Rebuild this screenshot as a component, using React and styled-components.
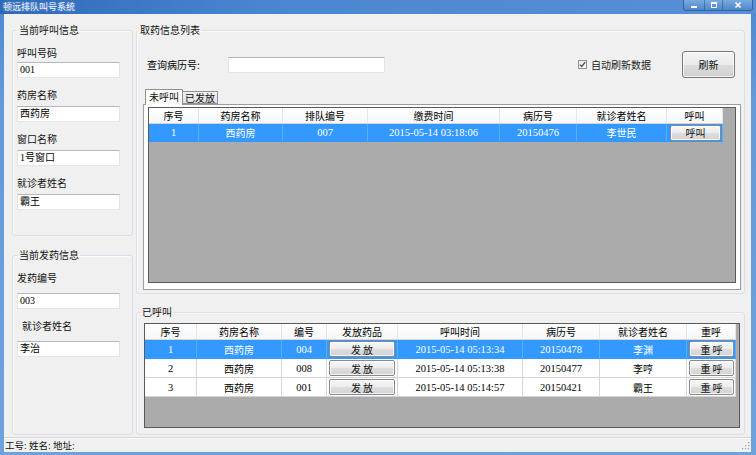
import React from 'react';
import styled, { createGlobalStyle } from 'styled-components';

const CJK = `"Noto Sans CJK SC", "Noto Sans", sans-serif`;
const DATA = `"Liberation Serif", "Noto Sans CJK SC", serif`;

const GlobalStyle = createGlobalStyle`
  html, body { margin: 0; padding: 0; background: #ffffff; }
  body { font-family: ${CJK}; font-size: 10px; color: #000; }
  * { box-sizing: border-box; }
`;

const Window = styled.div`
  width: 756px;
  height: 455px;
  display: flex;
  flex-direction: column;
  background: linear-gradient(180deg, #3572c2 0px, #4f8bd3 14px, #639ad9 100px, #6ea2dd 100%);
  overflow: hidden;
`;

const TitleBar = styled.div`
  height: 14px;
  display: flex;
  align-items: flex-start;
  justify-content: space-between;
  padding-left: 3px;
  background: linear-gradient(90deg, #2e69b8 0%, #4a86d0 35%, #5790d5 100%);
`;

const TitleText = styled.span`
  color: #f4f8fd;
  font-size: 9px;
  line-height: 13px;
  text-shadow: 0 0 3px rgba(255, 255, 255, 0.35);
`;

const ControlBox = styled.div`
  display: flex;
  height: 11px;
  margin-right: 3px;
  border: 1px solid rgba(30, 60, 110, 0.55);
  border-top: none;
  border-radius: 0 0 3px 3px;
  overflow: hidden;
`;

const CtrlButton = styled.div`
  width: ${(p) => p.$w}px;
  display: flex;
  align-items: center;
  justify-content: center;
  background: linear-gradient(180deg, #7aaae0, #4f87cc);
  border-left: ${(p) => (p.$first ? 'none' : '1px solid rgba(30, 60, 110, 0.45)')};
`;

const Client = styled.div`
  flex: 1;
  margin: 0 5px 3px 4px;
  background: #f0f0f0;
  display: flex;
  flex-direction: column;
  min-height: 0;
`;

const Main = styled.div`
  flex: 1;
  display: flex;
  padding: 10px 0 2px 0;
  min-height: 0;
`;

const LeftCol = styled.div`
  width: 132px;
  padding: 0 3px 0 8px;
  display: flex;
  flex-direction: column;
  gap: 13px;
`;

const RightCol = styled.div`
  flex: 1;
  padding-right: 6px;
  display: flex;
  flex-direction: column;
  gap: 12px;
  min-width: 0;
`;

const Group = styled.fieldset`
  margin: 0;
  min-width: 0;
  border: 1px solid #d9dfe4;
  border-radius: 3px;
  padding: ${(p) => p.$pad};
  height: ${(p) => (p.$h ? `${p.$h}px` : 'auto')};
  flex: ${(p) => (p.$grow ? 1 : 'none')};
  display: flex;
  flex-direction: column;
  box-shadow: inset 1px 1px 0 #fbfbfb;
`;

const Legend = styled.legend`
  padding: 0 1px;
  margin-left: ${(p) => p.$ml}px;
  font-size: 10px;
  line-height: 12px;
  color: #111;
`;

const FieldLabel = styled.div`
  line-height: 14px;
  font-size: 10px;
  padding-left: ${(p) => p.$indent || 0}px;
  margin-bottom: ${(p) => p.$gap}px;
  color: #111;
`;

const TextBox = styled.div`
  width: ${(p) => p.$w || 103}px;
  height: 16px;
  background: #fff;
  border: 1px solid #e2e6ea;
  border-top-color: #b4b8be;
  font-family: ${DATA};
  font-size: 10px;
  line-height: 14px;
  padding-left: 2px;
  margin-bottom: ${(p) => (p.$mb == null ? 10 : p.$mb)}px;
  white-space: nowrap;
`;

const SearchRow = styled.div`
  height: 27px;
  flex: none;
  display: flex;
  align-items: center;
  padding: 0 6px 0 4px;
`;

const SearchLabel = styled.span`
  width: 81px;
  font-size: 10px;
`;

const CheckGroup = styled.label`
  margin-left: auto;
  display: flex;
  align-items: center;
  gap: 4px;
  font-size: 10px;
  color: #222;
`;

const CheckBox = styled.span`
  width: 9px;
  height: 9px;
  border: 1px solid #939393;
  background: linear-gradient(180deg, #e9e9e9, #f9f9f9);
  display: flex;
  align-items: center;
  justify-content: center;
`;

const PushButton = styled.button`
  margin-left: 31px;
  width: 53px;
  height: 27px;
  border: 1px solid #7a7a7a;
  border-radius: 3px;
  background: linear-gradient(180deg, #f4f4f4 0%, #ebebeb 50%, #dddddd 51%, #d0d0d0 100%);
  font-family: ${CJK};
  font-size: 10px;
  color: #111;
  padding: 0;
  box-shadow: inset 0 0 0 1px rgba(255, 255, 255, 0.7);
`;

const TabStrip = styled.div`
  margin-top: 11px;
  height: 15px;
  flex: none;
  display: flex;
  align-items: flex-end;
  padding-left: 2px;
`;

const Tab = styled.div`
  position: relative;
  z-index: ${(p) => (p.$active ? 1 : 0)};
  height: ${(p) => (p.$active ? 16 : 13)}px;
  margin-bottom: ${(p) => (p.$active ? -1 : 0)}px;
  padding: 0 ${(p) => (p.$active ? 3 : 2)}px;
  border: 1px solid #8d9096;
  border-bottom: ${(p) => (p.$active ? 'none' : '1px solid #8d9096')};
  border-left: ${(p) => (p.$active ? '1px solid #8d9096' : 'none')};
  background: ${(p) => (p.$active ? '#ffffff' : 'linear-gradient(180deg, #f2f2f2, #e1e1e1)')};
  font-size: 10px;
  line-height: ${(p) => (p.$active ? 13 : 11)}px;
  color: #111;
`;

const TabPanel = styled.div`
  height: 186px;
  flex: none;
  border: 1px solid #9a9ca2;
  background: #ffffff;
  padding: 2px 4px 6px 4px;
  display: flex;
  flex-direction: column;
`;

const Grid = styled.div`
  flex: 1;
  border: 1px solid #5a5a5a;
  background: #ababab;
  display: flex;
  flex-direction: column;
  align-items: flex-start;
  overflow: hidden;
`;

const Row = styled.div`
  display: grid;
  flex: none;
  grid-template-columns: ${(p) => p.$cols.map((c) => `${c}px`).join(' ')};
  height: ${(p) => p.$h}px;
  background: ${(p) => (p.$sel ? '#3399ff' : p.$head ? 'linear-gradient(180deg, #ffffff, #f6f7f9)' : '#ffffff')};
  border-bottom: 1px solid ${(p) => (p.$sel ? '#3399ff' : '#d4d4d4')};
`;

const Cell = styled.div`
  display: flex;
  align-items: center;
  justify-content: center;
  border-right: 1px solid ${(p) => (p.$sel ? '#5aaeff' : p.$head ? '#e6e6e6' : '#d6d6d6')};
  color: ${(p) => (p.$sel ? '#ffffff' : '#000000')};
  font-family: ${(p) => (p.$num ? DATA : CJK)};
  font-size: ${(p) => (p.$num ? 10.5 : 10)}px;
  white-space: nowrap;
  overflow: hidden;
  padding: ${(p) => p.$pad || '0'};
`;

const CellButton = styled.div`
  width: 100%;
  height: 16px;
  border: 1px solid #8a8a8a;
  border-radius: 2px;
  background: linear-gradient(180deg, #f7f7f7 0%, #ececec 50%, #dedede 51%, #d3d3d3 100%);
  box-shadow: inset 0 0 0 1px rgba(255, 255, 255, 0.75);
  display: flex;
  align-items: center;
  justify-content: center;
  font-family: ${CJK};
  font-size: 10px;
  color: #111;
  white-space: pre;
`;

const StatusBar = styled.div`
  height: 15px;
  border-top: 1px solid #d6d6d6;
  box-shadow: inset 0 1px 0 #fafafa;
  display: flex;
  align-items: center;
  justify-content: space-between;
  padding: 0 1px 0 1px;
  font-family: ${DATA};
  font-size: 9.5px;
  color: #111;
`;

const upperCols = [50, 84, 85, 132, 77, 90, 56];
const lowerCols = [52, 85, 45, 71, 125, 77, 87, 49];

const upperHead = ['序号', '药房名称', '排队编号', '缴费时间', '病历号', '就诊者姓名', '呼叫'];
const upperRows = [
  { sel: true, cells: ['1', '西药房', '007', '2015-05-14 03:18:06', '20150476', '李世民', { btn: '呼叫' }] },
];

const lowerHead = ['序号', '药房名称', '编号', '发放药品', '呼叫时间', '病历号', '就诊者姓名', '重呼'];
const lowerRows = [
  { sel: true, cells: ['1', '西药房', '004', { btn: '发 放' }, '2015-05-14 05:13:34', '20150478', '李渊', { btn: '重 呼' }] },
  { sel: false, cells: ['2', '西药房', '008', { btn: '发 放' }, '2015-05-14 05:13:38', '20150477', '李哼', { btn: '重 呼' }] },
  { sel: false, cells: ['3', '西药房', '001', { btn: '发 放' }, '2015-05-14 05:14:57', '20150421', '霸王', { btn: '重 呼' }] },
];

const isNum = (v) => typeof v === 'string' && /^[0-9:\- ]+$/.test(v);

function DataGrid({ cols, head, rows, rowH, btnPads }) {
  return (
    <Grid>
      <Row $cols={cols} $h={16} $head>
        {head.map((h, i) => (
          <Cell key={i} $head>
            {h}
          </Cell>
        ))}
      </Row>
      {rows.map((r, ri) => (
        <Row key={ri} $cols={cols} $h={rowH} $sel={r.sel}>
          {r.cells.map((c, ci) =>
            typeof c === 'object' ? (
              <Cell key={ci} $sel={r.sel} $pad={btnPads[ci]}>
                <CellButton>{c.btn}</CellButton>
              </Cell>
            ) : (
              <Cell key={ci} $sel={r.sel} $num={isNum(c)}>
                {c}
              </Cell>
            )
          )}
        </Row>
      ))}
    </Grid>
  );
}

function Field({ label, value, gap, indent }) {
  return (
    <>
      <FieldLabel $gap={gap} $indent={indent}>
        {label}
      </FieldLabel>
      <TextBox>{value}</TextBox>
    </>
  );
}

const Check = () => (
  <svg width="7" height="7" viewBox="0 0 7 7">
    <path d="M0.8 3.6 L2.7 5.5 L6.2 1.2" fill="none" stroke="#4a4a4a" strokeWidth="1.2" />
  </svg>
);

const Grip = () => (
  <svg width="10" height="10" viewBox="0 0 10 10">
    {[
      [8, 2],
      [8, 5],
      [5, 5],
      [8, 8],
      [5, 8],
      [2, 8],
    ].map(([x, y], i) => (
      <rect key={i} x={x} y={y} width="1.2" height="1.2" fill="#a0a0a0" />
    ))}
  </svg>
);

export default function App() {
  return (
    <>
      <GlobalStyle />
      <Window>
        <TitleBar>
          <TitleText>顿远排队叫号系统</TitleText>
          <ControlBox>
            <CtrlButton $w={20} $first>
              <svg width="8" height="8" viewBox="0 0 8 8">
                <rect x="1" y="5" width="6" height="2" fill="#fff" />
              </svg>
            </CtrlButton>
            <CtrlButton $w={18}>
              <svg width="8" height="8" viewBox="0 0 8 8">
                <rect x="1.5" y="1.5" width="5" height="5" fill="none" stroke="#fff" strokeWidth="1" />
                <rect x="1.5" y="1.5" width="5" height="1.5" fill="#fff" />
              </svg>
            </CtrlButton>
            <CtrlButton $w={30}>
              <svg width="8" height="8" viewBox="0 0 8 8">
                <path d="M1.5 1.5 L6.5 6.5 M6.5 1.5 L1.5 6.5" stroke="#fff" strokeWidth="1.6" />
              </svg>
            </CtrlButton>
          </ControlBox>
        </TitleBar>
        <Client>
          <Main>
            <LeftCol>
              <Group $h={212} $pad="10px 4px 0 4px">
                <Legend $ml={1}>当前呼叫信息</Legend>
                <Field label="呼叫号码" value="001" gap={2} />
                <Field label="药房名称" value="西药房" gap={4} />
                <Field label="窗口名称" value="1号窗口" gap={4} />
                <Field label="就诊者姓名" value="霸王" gap={4} />
              </Group>
              <Group $h={186} $pad="10px 4px 0 4px">
                <Legend $ml={1}>当前发药信息</Legend>
                <Field label="发药编号" value="003" gap={8} />
                <Field label="就诊者姓名" value="李治" gap={8} indent={5} />
              </Group>
            </LeftCol>
            <RightCol>
              <Group $h={270} $pad="15px 3px 3px 6px">
                <Legend $ml={-4}>取药信息列表</Legend>
                <SearchRow>
                  <SearchLabel>查询病历号:</SearchLabel>
                  <TextBox $w={157} $mb={0} />
                  <CheckGroup>
                    <CheckBox>
                      <Check />
                    </CheckBox>
                    自动刷新数据
                  </CheckGroup>
                  <PushButton>刷新</PushButton>
                </SearchRow>
                <TabStrip>
                  <Tab $active>未呼叫</Tab>
                  <Tab>已发放</Tab>
                </TabStrip>
                <TabPanel>
                  <DataGrid
                    cols={upperCols}
                    head={upperHead}
                    rows={upperRows}
                    rowH={18}
                    btnPads={{ 6: '0 1px 0 3px' }}
                  />
                </TabPanel>
              </Group>
              <Group $grow $pad="5px 4px 6px 7px">
                <Legend $ml={-3}>已呼叫</Legend>
                <DataGrid
                  cols={lowerCols}
                  head={lowerHead}
                  rows={lowerRows}
                  rowH={19}
                  btnPads={{ 3: '0 2px 0 2px', 7: '0 1px 0 2px' }}
                />
              </Group>
            </RightCol>
          </Main>
          <StatusBar>
            <span>工号: 姓名: 地址:</span>
            <Grip />
          </StatusBar>
        </Client>
      </Window>
    </>
  );
}
